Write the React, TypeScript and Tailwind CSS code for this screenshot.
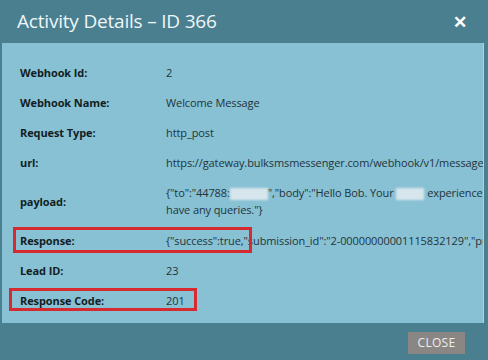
import { Fragment } from 'react'

const rows: { label: string; value: React.ReactNode; tall?: boolean; mark?: string }[] = [
    { label: 'Webhook Id:', value: '2' },
    { label: 'Webhook Name:', value: 'Welcome Message' },
    { label: 'Request Type:', value: 'http_post' },
    { label: 'url:', value: 'https://gateway.bulksmsmessenger.com/webhook/v1/message/send' },
    {
        label: 'payload:',
        tall: true,
        value: (
            <>
                <span className="whitespace-nowrap">
                    {'{"to":"44788:'}
                    <span className="inline-block w-[38px] h-[12px] align-middle bg-[#d6e6ec] blur-[1px]" />
                    {'","body":"Hello Bob. Your '}
                    <span className="inline-block w-[28px] h-[12px] align-middle bg-[#d6e6ec] blur-[1px]" />
                    {' experience with us is important. Please let us know if you'}
                </span>
                <br />
                {'have any queries."}'}
            </>
        ),
    },
    { label: 'Response:', value: '{"success":true,"submission_id":"2-00000000001115832129","processed":true}', mark: 'resp' },
    { label: 'Lead ID:', value: '23' },
    { label: 'Response Code:', value: '201', mark: 'code' },
]

export default function App() {
    return (
        <div className="w-[488px] h-[360px] bg-[#4a7f90] flex flex-col overflow-hidden" style={{ fontFamily: '"Open Sans", "Noto Sans", sans-serif' }}>
            <div className="h-[43px] shrink-0 flex items-center justify-between pl-[17px] pr-[21px]">
                <h1 className="text-[19px] leading-none text-[#eef6f8] tracking-[-0.2px]">Activity Details – ID 366</h1>
                <span className="text-white text-[17px] font-bold leading-none">✕</span>
            </div>

            <div className="h-[280px] shrink-0 ml-[2px] mr-[4px] bg-[#88c1d4] border-r border-[#a9d3e0] pt-[14px] pl-[18px] overflow-hidden">
                {rows.map((r) => (
                    <Fragment key={r.label}>
                        <div className={`relative flex items-center text-[11px] leading-[17px] tracking-[-0.1px] ${r.tall ? 'h-[48px]' : 'h-[30px]'}`}>
                            <div className="w-[146px] shrink-0 font-bold text-[#121e23]">{r.label}</div>
                            <div className="whitespace-nowrap text-[#22343b]">{r.value}</div>
                            {r.mark === 'resp' && (
                                <span className="absolute left-[-7px] top-[2px] w-[239px] h-[26px] border-[3px] border-[#d52b30]" />
                            )}
                            {r.mark === 'code' && (
                                <span className="absolute left-[-11px] top-[3px] w-[188px] h-[23px] border-[3px] border-[#d52b30]" />
                            )}
                        </div>
                    </Fragment>
                ))}
            </div>

            <div className="flex-1 flex items-center justify-end pr-[23px] pt-[2px]">
                <button className="w-[57px] h-[22px] bg-[#8a8684] text-[#eeeeee] text-[12px] leading-none tracking-[0.3px]">CLOSE</button>
            </div>
        </div>
    )
}
